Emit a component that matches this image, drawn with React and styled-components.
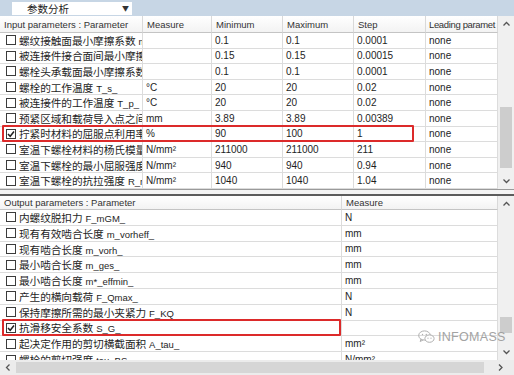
import React from 'react';
import styled, { createGlobalStyle } from 'styled-components';

const Global = createGlobalStyle`
  html, body { margin: 0; padding: 0; background: #fff; overflow: hidden; }
  body {
    font-family: "Liberation Sans", "Noto Sans CJK SC", sans-serif;
    font-size: 10px;
    color: #1e1e1e;
  }
  * { box-sizing: border-box; }
`;

const Frame = styled.div`
  position: relative;
  width: 514px;
  height: 375px;
  display: flex;
  flex-direction: column;
  overflow: hidden;
  background: #fff;
`;

const TopBar = styled.div`
  height: 16px;
  flex: none;
  background: #c7d6e5;
  display: flex;
  align-items: center;
  padding-left: 12px;
`;

const Dropdown = styled.div`
  width: 120px;
  height: 13px;
  background: #fff;
  display: flex;
  align-items: center;
  justify-content: space-between;
  padding: 0 3px 0 15px;
  font-family: "Noto Sans CJK SC", sans-serif;
  font-size: 10.5px;
  color: #222;
`;

const Caret = styled.span`
  font-size: 7px;
  color: #333;
`;

const Pane = styled.div`
  display: flex;
  flex: none;
  height: ${p => p.$h}px;
  overflow: hidden;
`;

const TableArea = styled.div`
  width: 498px;
  flex: none;
  overflow: hidden;
  display: flex;
  flex-direction: column;
`;

const Row = styled.div`
  position: relative;
  flex: none;
  display: grid;
  grid-template-columns: ${p => p.$cols};
  height: ${p => p.$h}px;
`;

const HeadCell = styled.div`
  display: flex;
  align-items: center;
  padding-left: ${p => (p.$tight ? 3 : 4)}px;
  letter-spacing: ${p => (p.$tight ? '-0.35px' : '0')};
  border-right: 1px solid #d9d9d9;
  border-bottom: 1px solid #c4c4c4;
  background: linear-gradient(#ffffff, #f3f3f3);
  color: #333;
  font-size: 9.5px;
  white-space: nowrap;
  overflow: hidden;
`;

const Cell = styled.div`
  display: flex;
  align-items: center;
  padding-left: 3px;
  border-right: 1px solid #dcdcdc;
  border-bottom: 1px solid #dcdcdc;
  white-space: nowrap;
  overflow: hidden;
  color: #1e1e1e;
`;

const ParamCell = styled(Cell)`
  padding-left: 6px;
  gap: 3px;
`;

const Label = styled.span`
  white-space: nowrap;
`;

const Cn = styled.span`
  font-family: "Noto Sans CJK SC", sans-serif;
  font-size: 10.7px;
  letter-spacing: -0.1px;
`;

const En = styled.span`
  margin-left: 3px;
  font-size: 9.5px;
`;

const Box = styled.span`
  flex: none;
  width: 10px;
  height: 10px;
  border: 1px solid #3c3c3c;
  background: #fff;
  display: flex;
  align-items: center;
  justify-content: center;
`;

const Highlight = styled.div`
  position: absolute;
  left: 2px;
  top: -2px;
  width: ${p => p.$w}px;
  height: 17px;
  border: 2px solid #dc2a2a;
  border-radius: 1px;
  pointer-events: none;
`;

const VScroll = styled.div`
  width: 16px;
  flex: none;
  background: #f0f0f0;
  display: flex;
  flex-direction: column;
`;

const Arrow = styled.div`
  height: ${p => p.$h || 16}px;
  width: ${p => p.$w || 16}px;
  flex: none;
  display: flex;
  align-items: center;
  justify-content: center;
`;

const Thumb = styled.div`
  width: 12px;
  margin: ${p => p.$top}px auto 0;
  height: ${p => p.$len}px;
  background: #cdcdcd;
`;

const Spacer = styled.div`
  flex: 1;
`;

const Splitter = styled.div`
  height: 7px;
  flex: none;
  background: #f4f4f4;
  border-top: 1px solid #9a9a9a;
  border-bottom: 2px solid #5c5c5c;
`;

const HScroll = styled.div`
  height: 15px;
  flex: none;
  display: flex;
  align-items: center;
  background: #ececec;
`;

const HThumb = styled.div`
  flex: 1;
  height: 11px;
  background: #d6d6d6;
  margin-right: 8px;
`;

const Watermark = styled.div`
  position: absolute;
  left: 418px;
  top: 330px;
  display: flex;
  align-items: center;
  gap: 3px;
  color: #9a9a9a;
  font-size: 12.5px;
  letter-spacing: 0.3px;
  opacity: 0.9;
`;

const Chevron = ({ dir }) => {
  const d = {
    up: 'M1.5 5.5 L4.5 2.5 L7.5 5.5',
    down: 'M1.5 2.5 L4.5 5.5 L7.5 2.5',
    left: 'M5.5 1.5 L2.5 4.5 L5.5 7.5',
    right: 'M3 1.5 L6 4.5 L3 7.5',
  }[dir];
  return (
    <svg width="9" height="9" viewBox="0 0 9 9">
      <path d={d} fill="none" stroke="#555" strokeWidth="1.3" />
    </svg>
  );
};

const Check = ({ on }) => (
  <Box>
    {on && (
      <svg width="8" height="8" viewBox="0 0 8 8">
        <path d="M1 4 L3.2 6.3 L7 1.5" fill="none" stroke="#222" strokeWidth="1.5" />
      </svg>
    )}
  </Box>
);

const inputCols = '143px 69px 71px 71px 72px 72px';
const outputCols = '342px 156px';

const inputRows = [
  ['螺纹接触面最小摩擦系数', 'mu_Gmin_', '', '0.1', '0.1', '0.0001'],
  ['被连接件接合面间最小摩擦系数', 'mu_Tmin_', '', '0.15', '0.15', '0.00015'],
  ['螺栓头承载面最小摩擦系数', 'mu_Kmin_', '', '0.1', '0.1', '0.0001'],
  ['螺栓的工作温度', 'T_s_', '°C', '20', '20', '0.02'],
  ['被连接件的工作温度', 'T_p_', '°C', '20', '20', '0.02'],
  ['预紧区域和载荷导入点之间', 'a_', 'mm', '3.89', '3.89', '0.00389'],
  ['拧紧时材料的屈服点利用率', 'nu_', '%', '90', '100', '1', true],
  ['室温下螺栓材料的杨氏模量', 'E_S_', 'N/mm²', '211000', '211000', '211'],
  ['室温下螺栓的最小屈服强度', 'R_p_', 'N/mm²', '940', '940', '0.94'],
  ['室温下螺栓的抗拉强度', 'R_m_', 'N/mm²', '1040', '1040', '1.04'],
];

const outputRows = [
  ['内螺纹脱扣力', 'F_mGM_', 'N'],
  ['现有有效啮合长度', 'm_vorheff_', 'mm'],
  ['现有啮合长度', 'm_vorh_', 'mm'],
  ['最小啮合长度', 'm_ges_', 'mm'],
  ['最小啮合长度', 'm*_effmin_', 'mm'],
  ['产生的横向载荷', 'F_Qmax_', 'N'],
  ['保持摩擦所需的最小夹紧力', 'F_KQ', 'N'],
  ['抗滑移安全系数', 'S_G_', '', true],
  ['起决定作用的剪切横截面积', 'A_tau_', 'mm²'],
  ['螺栓的剪切强度', 'tau_BS', 'N/mm²'],
];

const WeChatIcon = () => (
  <svg width="17" height="14" viewBox="0 0 17 14">
    <ellipse cx="6.5" cy="5.5" rx="5.8" ry="4.6" fill="none" stroke="#a8a8a8" strokeWidth="1" />
    <path d="M3 9 L2.2 11.5 L5.2 9.9" fill="none" stroke="#a8a8a8" strokeWidth="1" />
    <ellipse cx="11.5" cy="8.6" rx="4.6" ry="3.7" fill="#fff" stroke="#a8a8a8" strokeWidth="1" />
    <circle cx="4.5" cy="4.5" r="0.7" fill="#a8a8a8" />
    <circle cx="8.3" cy="4.5" r="0.7" fill="#a8a8a8" />
    <circle cx="10" cy="8.2" r="0.6" fill="#a8a8a8" />
    <circle cx="13" cy="8.2" r="0.6" fill="#a8a8a8" />
  </svg>
);

export default function App() {
  return (
    <Frame>
      <Global />
      <TopBar>
        <Dropdown>
          <span>参数分析</span>
          <Caret>▼</Caret>
        </Dropdown>
      </TopBar>

      <Pane $h={173}>
        <TableArea>
          <Row $cols={inputCols} $h={17}>
            <HeadCell>Input parameters : Parameter</HeadCell>
            <HeadCell>Measure</HeadCell>
            <HeadCell>Minimum</HeadCell>
            <HeadCell>Maximum</HeadCell>
            <HeadCell>Step</HeadCell>
            <HeadCell $tight>Leading paramet</HeadCell>
          </Row>
          {inputRows.map(([cn, en, unit, min, max, step, on], i) => (
            <Row key={i} $cols={inputCols} $h={15.6}>
              <ParamCell>
                <Check on={on} />
                <Label><Cn>{cn}</Cn><En>{en}</En></Label>
              </ParamCell>
              <Cell>{unit}</Cell>
              <Cell>{min}</Cell>
              <Cell>{max}</Cell>
              <Cell>{step}</Cell>
              <Cell>none</Cell>
              {on && <Highlight $w={412} />}
            </Row>
          ))}
        </TableArea>
        <VScroll>
          <Arrow><Chevron dir="up" /></Arrow>
          <Thumb $top={75} $len={61} />
          <Spacer />
          <Arrow><Chevron dir="down" /></Arrow>
        </VScroll>
      </Pane>

      <Splitter />

      <Pane $h={164}>
        <TableArea>
          <Row $cols={outputCols} $h={14}>
            <HeadCell>Output parameters : Parameter</HeadCell>
            <HeadCell>Measure</HeadCell>
          </Row>
          {outputRows.map(([cn, en, unit, on], i) => (
            <Row key={i} $cols={outputCols} $h={15.8}>
              <ParamCell>
                <Check on={on} />
                <Label><Cn>{cn}</Cn><En>{en}</En></Label>
              </ParamCell>
              <Cell>{unit}</Cell>
              {on && <Highlight $w={339} />}
            </Row>
          ))}
        </TableArea>
        <VScroll>
          <Arrow><Chevron dir="up" /></Arrow>
          <Thumb $top={105} $len={16} />
          <Spacer />
          <Arrow><Chevron dir="down" /></Arrow>
        </VScroll>
      </Pane>

      <HScroll>
        <Arrow $h={15}><Chevron dir="left" /></Arrow>
        <HThumb />
        <Arrow $h={15}><Chevron dir="right" /></Arrow>
        <Arrow $h={15} $w={6} />
      </HScroll>

      <Watermark>
        <WeChatIcon />
        <span>INFOMASS</span>
      </Watermark>
    </Frame>
  );
}
